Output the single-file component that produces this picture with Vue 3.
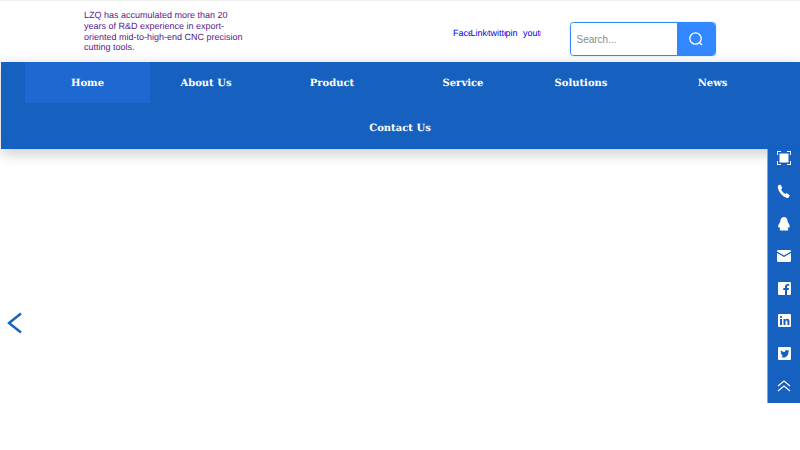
<template>
  <div class="page">
    <header class="top">
      <a href="#" class="intro">LZQ has accumulated more than 20 years of R&amp;D experience in export-oriented mid-to-high-end CNC precision cutting tools.</a>
      <div class="social">
        <a v-for="s in socials" :key="s" href="#" class="social-link">{{ s }}</a>
      </div>
      <form class="search" @submit.prevent>
        <input type="text" placeholder="Search..." />
        <button type="submit" aria-label="Search">
          <svg width="16" height="16" viewBox="0 0 16 16" fill="none" stroke="#fff" stroke-width="1.3">
            <circle cx="7.5" cy="7.5" r="5.7" />
            <path d="M11.7 11.7 14 14" />
          </svg>
        </button>
      </form>
    </header>

    <nav class="nav">
      <div class="nav-row">
        <a v-for="(item, i) in navItems" :key="item" href="#" :class="['nav-item', i === 0 ? 'active' : '']">{{ item }}</a>
      </div>
      <div class="nav-row-last">
        <a href="#" class="nav-item">Contact Us</a>
      </div>
    </nav>

    <main class="banner">
      <button class="prev" aria-label="Previous">
        <svg width="15" height="22" viewBox="0 0 15 22" fill="none" stroke="#1660c0" stroke-width="2.4">
          <path d="M14 1.500 2 11l12 9.500" />
        </svg>
      </button>
    </main>

    <aside class="side">
      <a href="#" class="side-icon" aria-label="Scan">
        <svg width="14" height="14" viewBox="0 0 14 14" fill="#fff">
          <rect x="2.5" y="2.5" width="9" height="9" />
          <path d="M0 4V0h4v1H1v3zM10 0h4v4h-1V1h-3zM14 10v4h-4v-1h3v-3zM4 14H0v-4h1v3h3z" />
        </svg>
      </a>
      <a href="#" class="side-icon" aria-label="Phone">
        <svg width="14" height="14" viewBox="0 0 14 14" fill="#fff">
          <path d="M1.200 1.600 3.400.6l2 3.300-1.300 1.300c.6 1.800 2 3.500 4.200 4.800l1.300-1 3.200 2.300-1 2.200c-.3.4-1 .6-1.800.4C5.400 12.700 1.800 8.600.8 3.300c-.1-.8 0-1.400.4-1.700z" />
        </svg>
      </a>
      <a href="#" class="side-icon" aria-label="QQ">
        <svg width="12" height="14" viewBox="0 0 12 14" fill="#fff">
          <path d="M6 0C8.300 0 9.500 1.800 9.600 4.200c0 .7.300 1.200.8 1.900.8 1.200 1.500 2.800 1.300 4-.1.700-.5.700-1.200-.2-.2 1-.6 1.600-1 2 .8.300 1.100.8.900 1.200-.2.300-1.200.6-2.600.6-.9 0-1.600-.3-1.900-.6H6c-.3.300-1 .6-1.900.6-1.400 0-2.400-.3-2.600-.6-.2-.4.100-.9.900-1.200-.4-.4-.8-1-1-2-.7.900-1.100.9-1.200.2-.2-1.200.5-2.800 1.300-4 .5-.7.800-1.200.8-1.900C2.500 1.800 3.700 0 6 0z" />
        </svg>
      </a>
      <a href="#" class="side-icon" aria-label="Mail">
        <svg width="14" height="12" viewBox="0 0 14 12" fill="#fff">
          <path d="M0 1.200C0 .5.500 0 1.200 0h11.600c.7 0 1.200.5 1.200 1.200v.3L7 5.400 0 1.500zM0 3l7 3.900L14 3v7.800c0 .7-.5 1.200-1.200 1.200H1.200C.5 12 0 11.500 0 10.800z" />
        </svg>
      </a>
      <a href="#" class="side-icon" aria-label="Facebook">
        <svg width="13" height="13" viewBox="0 0 13 13" fill="#fff">
          <path d="M1 0h11a1 1 0 0 1 1 1v11a1 1 0 0 1-1 1H9V8h1.700l.3-2H9V4.800c0-.6.200-1 1-1h1.100V2.100C10.800 2 10.300 2 9.700 2 8.100 2 7 3 7 4.600V6H5.300v2H7v5H1a1 1 0 0 1-1-1V1a1 1 0 0 1 1-1z" />
        </svg>
      </a>
      <a href="#" class="side-icon" aria-label="LinkedIn">
        <svg width="13" height="13" viewBox="0 0 13 13" fill="#fff">
          <path fill-rule="evenodd" d="M1 0h11a1 1 0 0 1 1 1v11a1 1 0 0 1-1 1H1a1 1 0 0 1-1-1V1a1 1 0 0 1 1-1zm1 5v6h2V5zm1-3a1.100 1.100 0 1 0 0 2.200A1.100 1.100 0 0 0 3 2zm2.500 3v6h2V7.800c0-.8.300-1.300 1-1.300s.9.500.9 1.300V11h2V7.300C11.400 5.700 10.600 4.800 9.300 4.800c-.8 0-1.400.3-1.800.9V5z" />
        </svg>
      </a>
      <a href="#" class="side-icon" aria-label="Twitter">
        <svg width="13" height="13" viewBox="0 0 13 13" fill="#fff">
          <path fill-rule="evenodd" d="M1 0h11a1 1 0 0 1 1 1v11a1 1 0 0 1-1 1H1a1 1 0 0 1-1-1V1a1 1 0 0 1 1-1zm7.700 3C7.500 3 6.700 4 6.800 5.100 5.300 5 3.900 4.300 3 3.200c-.5.900-.3 2 .5 2.600-.3 0-.6-.1-.8-.2 0 1 .6 1.800 1.500 2-.3.100-.6.100-.8 0 .2.800 1 1.300 1.800 1.400-.8.600-1.700.9-2.700.8 3.700 2 8-.3 8-4.800.4-.3.700-.6.900-1-.3.100-.7.200-1 .3.400-.2.700-.6.800-1-.4.200-.7.300-1.100.4C9.700 3.200 9.200 3 8.700 3z" />
        </svg>
      </a>
      <a href="#" class="side-icon" aria-label="Back to top">
        <svg width="14" height="12" viewBox="0 0 14 12" fill="none" stroke="#fff" stroke-width="1.100">
          <path d="M1 6 7 1l6 5M1 11l6-5 6 5" />
        </svg>
      </a>
    </aside>
  </div>
</template>

<script setup>
const socials = ['Facebook', 'LinkedIn', 'twitter', 'pin', 'youtube']
const navItems = ['Home', 'About Us', 'Product', 'Service', 'Solutions', 'News']
</script>

<style>
html, body { margin: 0; overflow: hidden; background: #fff; }
</style>

<style scoped>
.page {
  position: relative;
  width: 800px;
  height: 450px;
  overflow: hidden;
  background: #fff;
  font-family: "Liberation Sans", Arial, sans-serif;
  text-rendering: geometricPrecision;
}

.top {
  display: flex;
  align-items: center;
  height: 61px;
  padding-left: 84px;
  border-top: 1px solid #f2f2f2;
}
.intro {
  width: 160px;
  font-size: 9px;
  line-height: 10.700px;
  color: #551a8b;
  text-decoration: none;
}
.social {
  display: flex;
  margin-left: 209px;
  margin-top: 2px;
}
.social-link {
  width: 17.500px;
  overflow: hidden;
  font-size: 9px;
  color: #0000ee;
  text-decoration: none;
  white-space: nowrap;
}
.search {
  display: flex;
  width: 146px;
  height: 34px;
  margin-left: 29px;
  margin-top: 15px;
  box-sizing: border-box;
  border: 1px solid #3388ff;
  border-radius: 4px;
  box-shadow: 0 0 1px #3388ff;
  overflow: hidden;
}
.search input {
  flex: 1;
  min-width: 0;
  padding: 0 6px;
  border: 0;
  outline: 0;
  font: 10px "Liberation Sans", Arial, sans-serif;
}
.search input::placeholder { color: #8a8a8a; }
.search button {
  display: flex;
  align-items: center;
  justify-content: center;
  width: 38px;
  padding: 0;
  border: 0;
  background: #3388ff;
}

.nav {
  position: relative;
  box-sizing: border-box;
  height: 87px;
  margin-left: 1px;
  background: #1660c0;
  border-bottom: 1px solid #0f5ccc;
  box-shadow: 0 4px 14px rgba(0, 0, 0, 0.22);
}
.nav-row {
  display: grid;
  grid-template-columns: 125px 112px 140px 122px 114px 149px;
  height: 41px;
  padding-left: 24px;
}
.nav-row-last {
  display: flex;
  justify-content: center;
  height: 45px;
  padding-top: 5px;
  box-sizing: border-box;
  margin-left: -1px;
}
.nav-item {
  display: flex;
  align-items: center;
  justify-content: center;
  padding-top: 1px;
  font-family: "DejaVu Serif", serif;
  font-size: 10px;
  font-weight: 700;
  color: #fff;
  text-decoration: none;
}
.nav-item.active { background: #1d68d1; }

.prev {
  position: absolute;
  top: 312px;
  left: 7px;
  padding: 0;
  border: 0;
  background: none;
}

.side {
  position: absolute;
  top: 149px;
  right: 0;
  display: flex;
  flex-direction: column;
  width: 33px;
  height: 254px;
  padding-bottom: 1px;
  box-sizing: border-box;
  background: #1660c0;
  border-left: 1px solid #7fa6dd;
}
.side-icon {
  display: flex;
  flex: 1;
  align-items: center;
  justify-content: center;
}
.side-icon:first-child {
  flex: 0 0 26px;
  box-sizing: border-box;
  padding-bottom: 8px;
}
</style>
